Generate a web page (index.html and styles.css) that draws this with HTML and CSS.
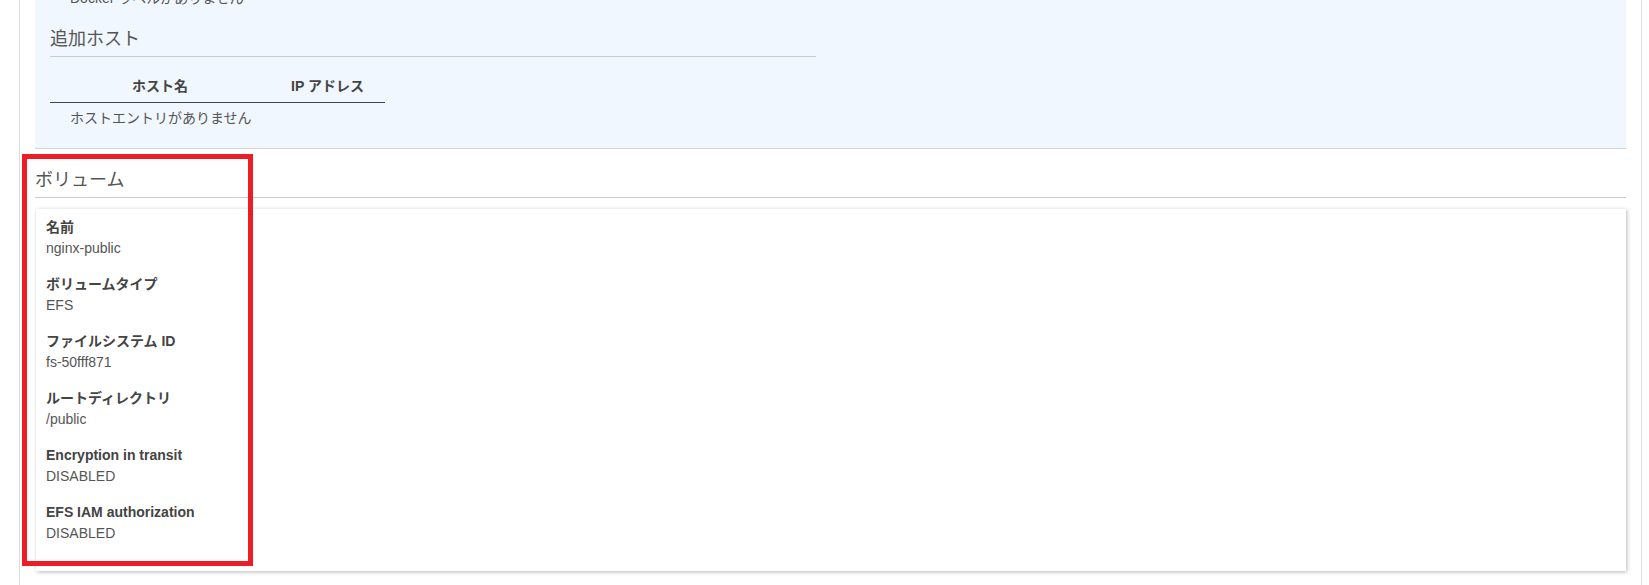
FILE: index.html
```html
<!DOCTYPE html>
<html lang="ja">
<head>
<meta charset="utf-8">
<title>ボリューム</title>
<link rel="stylesheet" href="styles.css">
</head>
<body>
<div class="page">
  <div class="extra">
    <div class="empty-row">Docker ラベルがありません</div>
    <div class="subsection">
      <h3 class="sub-title">追加ホスト</h3>
      <table class="hosts">
        <thead>
          <tr><th class="col-name">ホスト名</th><th class="col-ip">IP アドレス</th></tr>
        </thead>
        <tbody>
          <tr><td colspan="2" class="empty-cell">ホストエントリがありません</td></tr>
        </tbody>
      </table>
    </div>
  </div>

  <h2 class="section-title">ボリューム</h2>
  <div class="card">
    <dl class="props">
      <div class="prop"><dt>名前</dt><dd>nginx-public</dd></div>
      <div class="prop"><dt>ボリュームタイプ</dt><dd>EFS</dd></div>
      <div class="prop"><dt>ファイルシステム ID</dt><dd>fs-50fff871</dd></div>
      <div class="prop"><dt>ルートディレクトリ</dt><dd>/public</dd></div>
      <div class="prop"><dt>Encryption in transit</dt><dd>DISABLED</dd></div>
      <div class="prop"><dt>EFS IAM authorization</dt><dd>DISABLED</dd></div>
    </dl>
  </div>

  <div class="highlight"></div>
</div>
</body>
</html>
```

FILE: styles.css
```css
html, body {
  margin: 0;
  padding: 0;
  background: #fff;
  overflow: hidden;
}
body {
  font-family: "Liberation Sans", "Noto Sans CJK JP", Arial, sans-serif;
  font-size: 14px;
  color: #444;
}
.page {
  position: relative;
  display: flow-root;
  margin-left: 19px;
  width: 1591px;
  padding: 0 15px;
  border-left: 1px solid #ddd;
  border-right: 1px solid #ddd;
  min-height: 700px;
}
.extra {
  margin-top: -40px;
  padding: 28px 15px 20px;
  background: #f0f7fe;
  border-bottom: 1px solid #d4d4d4;
}
.empty-row {
  padding-left: 20px;
  line-height: 20px;
  color: #555;
}
.subsection {
  width: 766px;
  margin-top: 19px;
}
.sub-title {
  margin: 0;
  font-size: 18px;
  font-weight: normal;
  line-height: 24px;
  color: #555;
  padding-bottom: 5px;
  border-bottom: 1px solid #ccc;
}
.hosts {
  margin-top: 8px;
  border-collapse: collapse;
}
.hosts th {
  font-weight: bold;
  line-height: 20px;
  padding: 11px 0 6px;
  text-align: center;
  border-bottom: 1px solid #444;
  color: #444;
}
.col-name { width: 220px; }
.col-ip { width: 115px; }
.empty-cell {
  padding: 5px 0 0 20px;
  line-height: 20px;
  color: #555;
}
.section-title {
  margin: 19px 0 0;
  font-size: 18px;
  font-weight: normal;
  line-height: 24px;
  color: #555;
  padding-bottom: 5px;
  border-bottom: 1px solid #ccc;
}
.card {
  margin-top: 11px;
  margin-left: 1px;
  background: #fff;
  box-shadow: 1px 1px 4px rgba(0, 0, 0, 0.28);
  padding: 7px 10px 13px;
}
.props {
  margin: 0;
}
.prop {
  margin-bottom: 15px;
}
.prop dt {
  font-weight: bold;
  line-height: 22px;
  color: #444;
}
.prop dd {
  margin: 0;
  line-height: 20px;
  color: #555;
}
.highlight {
  position: absolute;
  left: 2px;
  top: 154px;
  width: 221px;
  height: 402px;
  border: 5px solid #ee1c25;
  pointer-events: none;
}
```
